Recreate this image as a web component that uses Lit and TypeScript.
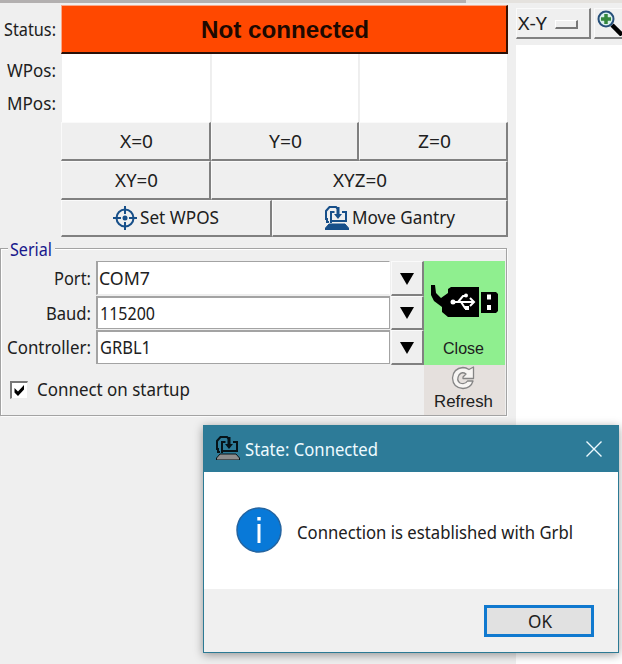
import { LitElement, html, svg, css } from "lit";
import { customElement, property } from "lit/decorators.js";

/** A single line label whose glyphs are fitted to a given width. Baseline is 16px down a 20px box. */
@customElement("fit-text")
class FitText extends LitElement {
  @property() text = "";
  @property({ type: Number }) w = 50;
  static styles = css`
    :host { display: block; flex: none; height: 20px; }
    svg { display: block; overflow: visible; }
    text { fill: currentColor; font: inherit; }
  `;
  render() {
    return html`<svg width=${this.w} height="20"><text x="0" y="16" textLength=${this.w} lengthAdjust="spacingAndGlyphs">${this.text}</text></svg>`;
  }
}

const gantry = (base: string) => svg`
  <path d="M4 16H2V13H1V5L4.500 1H11L13 3M6 17V6H9.500M17 6H21V15M6 15H22" fill="none" stroke="currentColor" stroke-width="2"/>
  <path d="M11.500 1H14.500V8H17L13 13L9 8H11.500Z" fill="currentColor"/>
  <path d="M4 18H20L23.500 22V24H.5V22Z" fill=${base} stroke="currentColor" stroke-width="1"/>`;

@customElement("app-root")
class AppRoot extends LitElement {
  static styles = css`
    :host { display: block; position: relative; width: 622px; height: 664px; overflow: hidden;
      background: #fff; color: #202020; font: 18px "Noto Sans", "Open Sans", sans-serif; }
    * { box-sizing: border-box; }
    svg { display: block; flex: none; }
    .page { display: grid; grid-template-columns: 516px 106px; height: 664px; }
    .panel { background: #efefef; }
    .strip { height: 5px; width: 466px; border-top: 3px solid #b3b0b0; }
    .lead { background: linear-gradient(#e5e2de 0 3px, #efefef 3px); }
    .dro { display: grid; grid-template-columns: 61px 150px 148px 149px; grid-template-rows: 49px 34px 34px 39px 39px 37px; width: 508px; }
    .lab { display: flex; justify-content: flex-end; align-items: center; padding-right: 5px; }
    .lab.w { grid-area: 2 / 1; padding-bottom: 1px; }
    .lab.m { grid-area: 3 / 1; padding-bottom: 3px; }
    .status { grid-column: 2 / 5; display: flex; align-items: center; justify-content: center; padding: 6px 0 0 1px;
      background: #ff4800; border: 1px solid #f8a98c; border-right: 2px solid #391000; border-bottom: 2px solid #291008;
      color: #1d0900; font: bold 24px "Liberation Sans", Arial, sans-serif; }
    .cell { background: #fff; grid-row: 2 / 4; margin-left: 1px; border-right: 1px solid #eee; }
    .cell.x { grid-column: 2; }
    .cell.y { grid-column: 3; }
    .cell.z { grid-column: 4; }
    .btn { display: flex; align-items: center; justify-content: center; gap: 3px; background: #efefef;
      border: 1px solid #fafafa; border-right: 2px solid #808080; border-bottom: 2px solid #808080; }
    .zero { padding: 2px 0 0 2px; }
    .wide { grid-column: 3 / 5; }
    .pair { grid-column: 2 / 5; display: grid; grid-template-columns: 211px 236px; }
    .blue { color: #174f89; }
    .serial { position: relative; margin-top: 11px; width: 507px; height: 168px; border: 1px solid #a3a3a3;
      box-shadow: inset 1px 1px #fff, 1px 1px #fbfbfb; display: grid; grid-template-columns: 423px 81px; padding-top: 12px; }
    .legend { position: absolute; left: 7px; top: -9px; background: #efefef; padding: 0 3px 0 2px; color: #18188c; }
    .row { display: grid; grid-template-columns: 95px 294px 34px; height: 34.500px; }
    .row .lab { padding: 2px 5px 0 0; }
    .entry { background: #fff; border: 2px solid #a3a3a3; border-right-width: 1px; border-bottom-width: 1px; margin-bottom: 1px; display: flex; align-items: center; padding: 2px 0 0 2px; }
    .entry.first { border-right-color: #fff; border-bottom-color: #eee; border-top-width: 1px; padding: 2px 0 0 1px; }
    .drop { margin-left: 1px; padding-top: 2px; }
    .check { display: flex; align-items: center; gap: 9px; padding: 15px 0 0 9px; }
    .box { width: 18px; height: 18px; background: #fff; border: 2px solid #777; border-right: 1px solid #eee; border-bottom: 1px solid #eee; }
    .side { font: 16px "Liberation Sans", Arial, sans-serif; }
    .side fit-text { position: relative; left: -1px; }
    .close { height: 104px; background: #8fef8f; display: flex; flex-direction: column; align-items: center; }
    .close svg { margin-top: 24px; }
    .close fit-text { margin-top: 21px; }
    .refresh { height: 50px; background: #e5e0dd; display: flex; flex-direction: column; align-items: center; }
    .refresh svg { margin: 1px 4px 0 0; }
    .refresh fit-text { margin-top: 1px; }
    .tools { height: 45px; background: linear-gradient(#e5e2de 0 3px, #efefef 3px); display: flex; padding-top: 8px; gap: 3px; }
    .tool { height: 31px; width: 75px; flex: none; gap: 8px; justify-content: flex-start; padding: 2px 0 0 1px; }
    .knob { width: 23px; height: 9px; background: #efefef; border: 1px solid #fff; border-right: 2px solid #777; border-bottom: 2px solid #777; }
    .zoom { width: 40px; padding: 0 0 0 2px; }
    .dialog { position: absolute; left: 203px; top: 425px; width: 416px; height: 228px; border: 1px solid #2c7a94;
      background: #fff; box-shadow: 0 2px 9px rgba(0, 0, 0, .38); display: grid; grid-template-rows: 46px 117px 63px; }
    .title { background: #2d7b98; color: #eefaff; display: flex; align-items: center; padding: 1px 16px 0 12px; gap: 5px; }
    .title .mark { color: #061318; margin-top: -3px; }
    .title .x { margin-left: auto; margin-top: -2px; }
    .body { display: flex; align-items: center; padding-left: 32px; gap: 15px; color: #202020; }
    .body svg { margin-top: -1px; }
    .body fit-text { margin-top: 4px; }
    .foot { background: #f0f0f0; display: flex; justify-content: flex-end; align-items: flex-start; padding: 16px 24px 0 0; }
    .ok { width: 110px; height: 32px; background: #e1e1e1; border: 3px solid #1079cf; display: flex; align-items: center; justify-content: center; padding: 2px 0 0 1px; }
  `;

  private row(label: string, lw: number, value: string, vw: number, first = false) {
    return html`<div class="row">
      <div class="lab"><fit-text .text=${label} .w=${lw}></fit-text></div>
      <div class="entry ${first ? "first" : ""}"><fit-text .text=${value} .w=${vw}></fit-text></div>
      <div class="btn drop"><svg width="14" height="12"><path d="M0 0H14L7 12Z" fill="#000"/></svg></div>
    </div>`;
  }

  render() {
    return html`
      <div class="page">
        <div class="panel">
          <div class="lead"><div class="strip"></div></div>
          <div class="dro">
            <div class="lab"><fit-text text="Status:" w="52"></fit-text></div>
            <div class="status"><fit-text text="Not connected" w="168"></fit-text></div>
            <div class="lab w"><fit-text text="WPos:" w="49"></fit-text></div>
            <div class="lab m"><fit-text text="MPos:" w="49"></fit-text></div>
            <div class="cell x"></div><div class="cell y"></div><div class="cell z"></div>
            <div></div>
            <div class="btn zero"><fit-text text="X=0" w="33"></fit-text></div>
            <div class="btn zero"><fit-text text="Y=0" w="33"></fit-text></div>
            <div class="btn zero"><fit-text text="Z=0" w="33"></fit-text></div>
            <div></div>
            <div class="btn zero"><fit-text text="XY=0" w="43"></fit-text></div>
            <div class="btn zero wide"><fit-text text="XYZ=0" w="54"></fit-text></div>
            <div></div>
            <div class="pair">
              <div class="btn">
                <svg class="blue" width="24" height="24" fill="none" stroke="currentColor" stroke-width="2"><circle cx="12" cy="12" r="8.500"/><circle cx="12" cy="12" r="2.500" fill="currentColor" stroke="none"/><path d="M12 0V8M12 16V24M0 12H8M16 12H24"/></svg>
                <fit-text text="Set WPOS" w="79"></fit-text>
              </div>
              <div class="btn">
                <svg class="blue" width="24" height="24">${gantry("currentColor")}</svg>
                <fit-text text="Move Gantry" w="103"></fit-text>
              </div>
            </div>
          </div>
          <div class="serial">
            <div class="legend"><fit-text text="Serial" w="42"></fit-text></div>
            <div>
              ${this.row("Port:", 37, "COM7", 51, true)}
              ${this.row("Baud:", 45, "115200", 55)}
              ${this.row("Controller:", 84, "GRBL1", 51)}
              <div class="check">
                <div class="box"><svg width="15" height="15"><path d="M2.500 5L6 8.500L12 2V6.500L6 13L2.500 9.500Z" fill="#000"/></svg></div>
                <fit-text text="Connect on startup" w="153"></fit-text>
              </div>
            </div>
            <div class="side">
              <div class="close">
                <svg width="68" height="32">
                  <path d="M0 0H4L5 8L10 13L17 8V4L20 2H48V32H17L11 27V22L3 16L0 10Z" fill="#000"/>
                  <path d="M50 7H65L67 9V26L65 28H50Z" fill="#000"/>
                  <path d="M56 9.500H60V14.500H56ZM56 20H60V25H56Z" fill="#fff"/>
                  <g fill="none" stroke="#fff" stroke-width="2"><path d="M22 17H43M27 17L32 11H35M30 17L34 23H37M39 13L43 17L39 21"/></g>
                  <circle cx="22" cy="17" r="2.500" fill="#fff"/><circle cx="35" cy="10.500" r="2" fill="#fff"/><path d="M34 21H38V25H34Z" fill="#fff"/>
                </svg>
                <fit-text text="Close" w="41"></fit-text>
              </div>
              <div class="refresh">
                <svg width="24" height="24"><path d="M18 3.500L22.500 1V12.500H12V11L15 8Q11 5 8 9Q5 14 9 17Q14 19 16.500 15H22Q20 22 12 22.500Q2 22 1.500 12Q2 2.500 12 1.500Q15 1.500 18 3.500Z" fill="#f7f5f3" stroke="#858585" stroke-width="1.300" stroke-linejoin="round"/></svg>
                <fit-text text="Refresh" w="59"></fit-text>
              </div>
            </div>
          </div>
        </div>
        <div class="canvas">
          <div class="tools">
            <div class="btn tool"><fit-text text="X-Y" w="29"></fit-text><div class="knob"></div></div>
            <div class="btn tool zoom">
              <svg width="26" height="26"><path d="M15 15L25 25" stroke="#000" stroke-width="4.500"/><circle cx="9" cy="9" r="7.500" fill="#d9efed" stroke="#264f7a" stroke-width="2"/><path d="M9 4V14M4 9H14" stroke="#34863c" stroke-width="3.500"/></svg>
            </div>
          </div>
        </div>
      </div>
      <div class="dialog">
        <div class="title">
          <svg class="mark" width="24" height="24">${gantry("#8d8d8d")}</svg>
          <fit-text text="State: Connected" w="133"></fit-text>
          <svg class="x" width="16" height="16"><path d="M.5.5L15.500 15.500M15.500.5L.5 15.500" stroke="#eefaff" stroke-width="1.400"/></svg>
        </div>
        <div class="body">
          <svg width="46" height="46"><circle cx="23" cy="23" r="22" fill="#0879d8" stroke="#2464a0" stroke-width="1.500"/><path d="M21.300 10H24.700V13.500H21.300ZM21.500 17H24.500V36H21.500Z" fill="#fff"/></svg>
          <fit-text text="Connection is established with Grbl" w="276"></fit-text>
        </div>
        <div class="foot"><div class="ok"><fit-text text="OK" w="24"></fit-text></div></div>
      </div>`;
  }
}
